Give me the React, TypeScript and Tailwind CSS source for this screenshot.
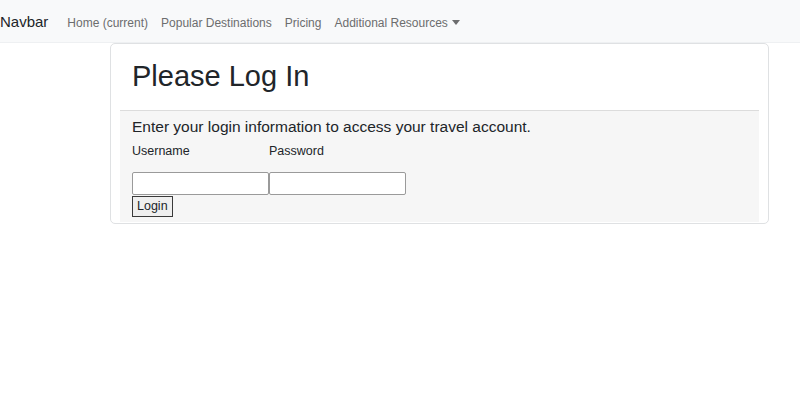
export default function App() {
  const font = { fontFamily: '"Liberation Sans", Arial, sans-serif' };
  return (
    <div className="min-h-[400px] w-[800px] bg-white text-[#212529]" style={font}>
      <nav className="flex h-[43px] items-center pt-[3px] bg-[#f8f9fa] border-b border-[#eef0f2]">
        <span className="text-[15px] text-[#212529] mr-[19px]">Navbar</span>
        <div className="flex items-center gap-[13px] text-[12px] text-[#6c6d6e]">
          <span>Home (current)</span>
          <span>Popular Destinations</span>
          <span>Pricing</span>
          <span className="flex items-center">
            Additional Resources
            <span className="ml-[4px] inline-block h-0 w-0 border-x-[4px] border-t-[5px] border-x-transparent border-t-[#6c6d6e]"></span>
          </span>
        </div>
      </nav>
      <div className="ml-[110px] w-[659px] rounded-[5px] border border-[#dfe1e3] pb-[1px]">
        <div className="px-[21px] pt-[14px] pb-[14px] h-[66px]">
          <h1 className="text-[29px] leading-[36px] text-[#212529]">Please Log In</h1>
        </div>
        <div className="mx-[9px] border-t border-[#dcdcdc] bg-[#f6f6f6] px-[12px] pt-[5px] pb-[5px]">
          <p className="text-[15.5px] leading-[22px]">Enter your login information to access your travel account.</p>
          <div className="mt-[4px] flex text-[12.5px]">
            <label className="w-[137px]">Username</label>
            <label>Password</label>
          </div>
          <div className="mt-[11px] flex">
            <input className="h-[23px] w-[137px] border border-[#9a9a9a] rounded-[2px] bg-white" />
            <input className="h-[23px] w-[137px] border border-[#9a9a9a] rounded-[2px] bg-white" />
          </div>
          <button className="mt-[1px] block h-[21px] border border-[#3a3a3a] bg-[#efefef] px-[4px] text-[12.5px] leading-none">Login</button>
        </div>
      </div>
    </div>
  );
}
